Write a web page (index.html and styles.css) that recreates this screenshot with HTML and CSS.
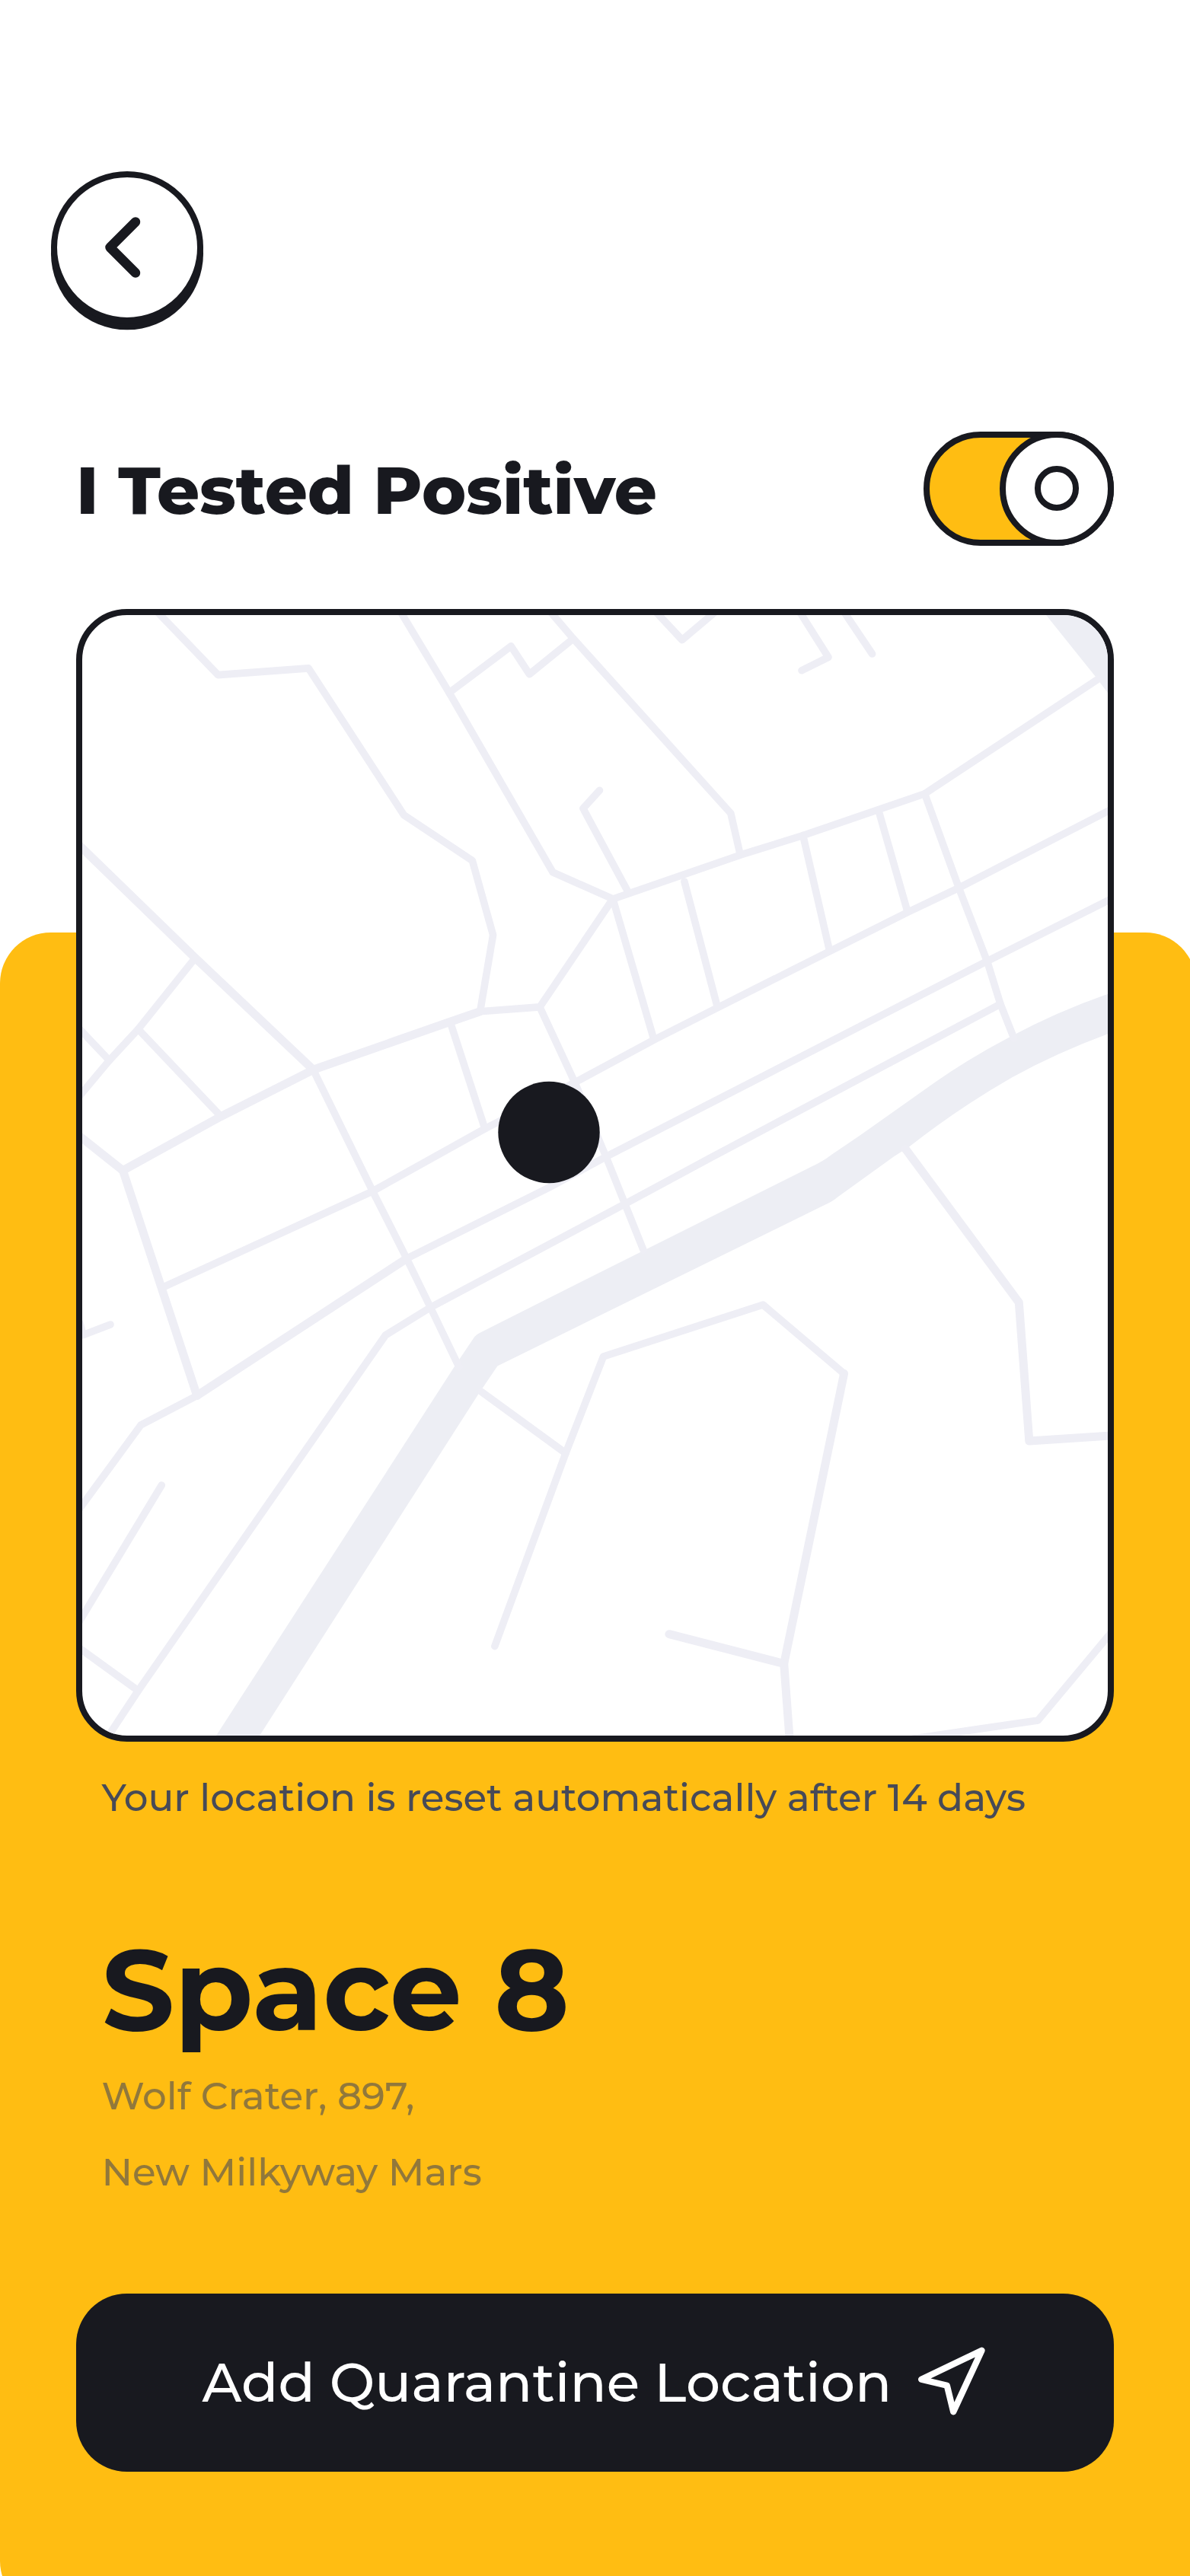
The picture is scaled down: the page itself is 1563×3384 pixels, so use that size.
FILE: index.html
```html
<!DOCTYPE html>
<html lang="en">
<head>
<meta charset="utf-8">
<title>I Tested Positive</title>
<link rel="stylesheet" href="styles.css">
</head>
<body>
<main class="screen">
  <header class="header">
    <button class="back" aria-label="Back">
      <svg class="back-icon" viewBox="0 0 60 100" fill="none"><path d="M44 16.5 10.5 50 44 83.5"/></svg>
    </button>
    <div class="title-row">
      <h1 class="title">I Tested Positive</h1>
      <div class="toggle" role="switch" aria-checked="true"><span class="knob"><span class="knob-ring"></span></span></div>
    </div>
  </header>

  <section class="panel">
    <div class="map">
      <svg class="map-svg" viewBox="108 808 1347 1472">
        <g class="water">
          <path d="M284 2280 598 1793.6 622 1758Q625 1753 632 1750L780 1675.5 847 1642 1065 1533Q1082 1525 1092 1517L1129.6 1491.5 1229.5 1420.8Q1277 1388 1326.8 1362 1390 1328 1460 1304V1356.5Q1390 1382 1329 1415.5 1260 1455 1193.5 1507L1174.5 1519 1099.6 1573 Q1094 1578 1085 1582L780 1732 653.4 1794.6 628 1832 341 2280Z"/>
          <path d="M1370 803 1439 889 1460 917V803Z"/>
        </g>
        <g class="roads">
          <path d="M203 800 286.4 886.6 405.2 877.9 530.6 1070.8 620.3 1130.4 647.6 1228.3 630.6 1328.7"/>
          <path d="M524 800 590 910 726.1 1145.9 805 1180.8"/>
          <path d="M590 910 671.2 848.8 695.3 885.7 752.9 839"/>
          <path d="M718 798 753 839 959.8 1068.4 972.3 1123"/>
          <path d="M787.5 1038.3 765.9 1062 824 1170"/>
          <path class="major" d="M100 1106.5 256 1258 411.4 1405.3"/>
          <path class="major" d="M411.4 1405.3 592 1342 630.6 1328.7"/>
          <path d="M630.6 1328.7 709 1322.9 805 1180.8"/>
          <path d="M256 1258.9 181.5 1352 143.6 1393 100 1445"/>
          <path d="M100 1347 143.6 1393M181.5 1352 289.5 1465.9"/>
          <path class="major" d="M100 1489 161.4 1537.6 289.5 1467 411.4 1405.3"/>
          <path d="M411.4 1405.3 489.5 1564.8 534.2 1653.3 565.4 1717.5 603 1796"/>
          <path d="M592 1344.7 636.9 1482.8"/>
          <path d="M709 1323 755 1422 797 1522 845 1642"/>
          <path d="M212.8 1691.6 489.5 1564.8 636.9 1482.8 755 1422 859.9 1365.5 942 1324 1090.6 1249.2 1193.5 1197.8 1259.4 1166.3 1460 1063"/>
          <path class="major" d="M534.2 1653.3 258.7 1833.4"/>
          <path d="M100 1988 185 1872 258.7 1833.4"/>
          <path d="M534.2 1653.3 721.6 1559.8 797 1519 1294.4 1263.7 1460 1180.5"/>
          <path d="M140 2284 181.5 2221 506.5 1753.8 565.4 1717.5 790 1598 820 1582 935 1520 1314 1319"/>
          <path d="M100 2162 181.5 2221M100 2137 212.3 1951"/>
          <path d="M105 1738 109 1753.8 145 1740"/>
          <path class="major" d="M161.4 1537.6 258.7 1833.4"/>
          <path class="major" d="M1189.5 1509.5 1338.3 1711 1351.8 1893 1460 1886"/>
          <path d="M632.4 1828.4 743 1909"/>
          <path d="M649.8 2162.6 743 1909 792.5 1782 1002.2 1714 1108.6 1804.5"/>
          <path class="major" d="M1108.6 1804.5 1029.7 2185.5 1037.5 2290"/>
          <path class="major" d="M878.9 2146.7 1029.7 2185.5"/>
          <path d="M1460 2144 1363.3 2260 1200 2284"/>
          <path d="M805 1181 858.4 1364M898.9 1158 942.3 1323M1054.7 1097.5 1089.6 1249M1154.6 1067 1192 1197.8"/>
          <path d="M1214.5 1042.7 1259.4 1166.3 1296.9 1263.7 1314 1319 1331.8 1364"/>
          <path d="M805 1181 972.3 1123.2 1054.7 1097.5 1214.5 1042.7 1441.7 892.4"/>
          <path d="M858 800 895.9 840.6 944 800M1048 800 1088 863.4 1053 880.8M1106 800 1145.6 859"/>
        </g>
        <circle class="pin" cx="721" cy="1487.5" r="66.7"/>
      </svg>
    </div>
    <div class="details">
      <p class="caption">Your location is reset automatically after 14 days</p>
      <h2 class="place">Space 8</h2>
      <address class="address">Wolf Crater, 897,<br>New Milkyway Mars</address>
    </div>
    <button class="cta">
      <span>Add Quarantine Location</span>
      <svg class="cta-icon" viewBox="0 0 88 90" fill="none"><path d="M83.5 4.7 4.2 42.7 37.8 50.7 46.2 85.3Z"/></svg>
    </button>
  </section>
</main>
</body>
</html>
```
FILE: styles.css
```css
:root {
  --ink: #18191f;
  --yellow: #ffbd12;
  --line: #eeeef5;
  --stroke: 8.34px;
}

* { box-sizing: border-box; }

body {
  margin: 0;
  background: #fff;
  color: var(--ink);
  font-family: Montserrat, Inter, sans-serif;
}

button {
  font: inherit;
  border: 0;
  padding: 0;
}

.screen {
  width: 1563px;
  height: 3384px;
  overflow: hidden;
  background: #fff;
}

.header {
  height: 1225px;
  padding: 225px 100px 0;
}

.back {
  display: flex;
  align-items: center;
  justify-content: center;
  width: 200px;
  height: 200px;
  margin-left: -33.3px;
  border: var(--stroke) solid var(--ink);
  border-radius: 50%;
  background: #fff;
  box-shadow: 0 8.34px 0 var(--ink);
}

.back-icon {
  width: 60px;
  height: 100px;
  margin-right: 6px;
  stroke: var(--ink);
  stroke-width: 12.5;
  stroke-linecap: round;
  stroke-linejoin: round;
}

.title-row {
  display: flex;
  align-items: center;
  justify-content: space-between;
  margin-top: 141.5px;
}

.title {
  margin: 0;
  padding-top: 4px;
  font-size: 87.5px;
  font-weight: 800;
  line-height: 108px;
}

.toggle {
  display: flex;
  justify-content: flex-end;
  width: 250px;
  height: 150px;
  border-radius: 75px;
  border: var(--stroke) solid var(--ink);
  background: var(--yellow);
}

.knob {
  display: flex;
  flex: none;
  align-items: center;
  justify-content: center;
  width: 150px;
  height: 150px;
  margin: -8px;
  border: var(--stroke) solid var(--ink);
  border-radius: 50%;
  background: #fff;
}

.knob-ring {
  width: 58.3px;
  height: 58.3px;
  border: var(--stroke) solid var(--ink);
  border-radius: 50%;
}

.panel {
  display: flow-root;
  width: 1571px;
  height: 2206px;
  padding-left: 100px;
  border-radius: 66.7px;
  background: var(--yellow);
}

.map {
  width: 1363px;
  height: 1488px;
  margin-top: -425px;
  border: var(--stroke) solid var(--ink);
  border-radius: 66.7px;
  background: #fff;
  overflow: hidden;
}

.map-svg {
  display: block;
  width: 100%;
  height: 100%;
}

.water { fill: #edeef4; }

.roads {
  fill: none;
  stroke: var(--line);
  stroke-width: 9.6;
  stroke-linecap: round;
  stroke-linejoin: round;
}

.major { stroke-width: 11; }

.pin { fill: var(--ink); }

.details { padding-left: 33.4px; }

.caption {
  margin: 44px 0 0;
  font-size: 50.02px;
  font-weight: 500;
  line-height: 60px;
  color: #474a57;
}

.place {
  margin: 135px 0 0;
  font-size: 150px;
  font-weight: 700;
  line-height: 174px;
}

.address {
  margin-top: 3px;
  font-size: 50.02px;
  font-style: normal;
  font-weight: 500;
  line-height: 100px;
  color: rgba(71, 74, 87, 0.6);
}

.cta {
  display: flex;
  align-items: center;
  gap: 35px;
  width: 1363px;
  height: 233.5px;
  margin-top: 109px;
  padding-left: 165.5px;
  border-radius: 66.7px;
  background: var(--ink);
  color: #fff;
  font-size: 70.9px;
  font-weight: 500;
  line-height: 88px;
  white-space: nowrap;
}

.cta-icon {
  width: 88px;
  height: 90px;
  margin-bottom: 4px;
  stroke: #fff;
  stroke-width: 8.34;
  stroke-linecap: round;
  stroke-linejoin: round;
}
```
